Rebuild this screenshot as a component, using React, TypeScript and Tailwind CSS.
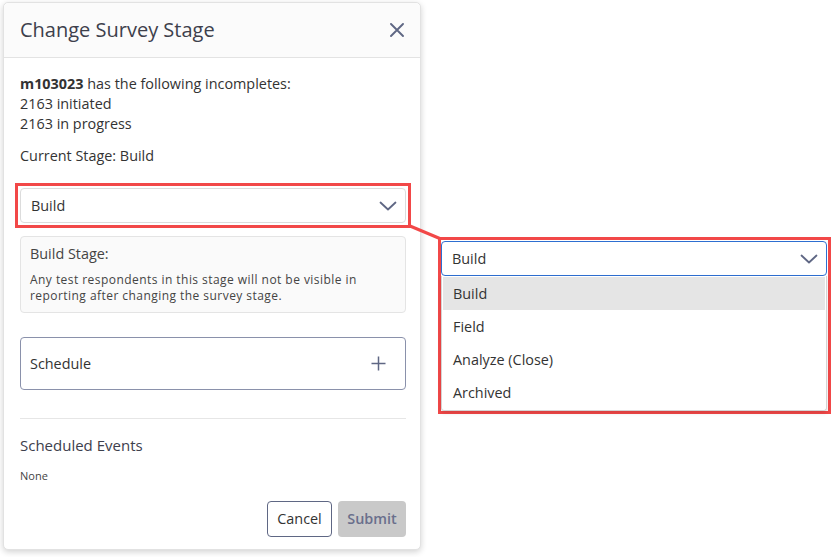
const font = { fontFamily: '"Open Sans", "Noto Sans", sans-serif' };

function Chevron() {
  return (
    <svg width="18" height="10" viewBox="0 0 18 10" fill="none">
      <polyline points="1.5,1.5 9,8.5 16.5,1.5" stroke="#5f6784" strokeWidth="1.8" strokeLinecap="round" strokeLinejoin="round" />
    </svg>
  );
}

export default function App() {
  return (
    <div className="relative w-[831px] h-[557px] bg-white overflow-hidden text-[#333]" style={font}>
      <svg className="absolute left-0 top-0 pointer-events-none" width="831" height="557">
        <line x1="410" y1="226" x2="441" y2="239" stroke="#f24848" strokeWidth="3" />
      </svg>

      <div className="flex items-start pl-[3px] pt-[2px]">
        {/* modal */}
        <div className="shrink-0 w-[418px] h-[548px] bg-white border border-[#e2e2e2] rounded-[5px] shadow-[0_2px_6px_rgba(0,0,0,0.18)] flex flex-col">
          <div className="h-[55px] flex items-center justify-between pl-[16px] pr-[16px] border-b border-[#e3e3e3] bg-[#fbfbfb] rounded-t-[5px]">
            <div className="text-[20px] text-[#3d404c] leading-none">Change Survey Stage</div>
            <svg width="14" height="14" viewBox="0 0 14 14">
              <path d="M1 1 L13 13 M13 1 L1 13" stroke="#5f6784" strokeWidth="1.9" strokeLinecap="round" />
            </svg>
          </div>

          <div className="pl-[16px] pr-[14px] pt-[16px] flex flex-col">
            <div className="text-[14.4px] leading-[20px] text-[#333]">
              <div>
                <span className="font-bold">m103023</span> has the following incompletes:
              </div>
              <div>2163 initiated</div>
              <div>2163 in progress</div>
            </div>
            <div className="text-[14.4px] leading-[20px] mt-[12px]">Current Stage: Build</div>

            <div className="mt-[17px] -mx-[5px] border-[3px] border-[#f24848] p-[2px]">
              <div className="h-[35px] border border-[#dcdcdc] rounded-[4px] flex items-center justify-between pl-[10px] pr-[8px]">
                <span className="text-[14.4px]">Build</span>
                <Chevron />
              </div>
            </div>

            <div className="mt-[8px] border border-[#e4e4e4] rounded-[4px] bg-[#fafafa] px-[9px] pt-[7px] pb-[8px]">
              <div className="text-[14.4px] leading-[20px] text-[#444]">Build Stage:</div>
              <div className="text-[12px] tracking-[0.45px] leading-[16px] text-[#444] mt-[8px]">
                Any test respondents in this stage will not be visible in reporting after changing the survey stage.
              </div>
            </div>

            <div className="mt-[24px] h-[53px] border border-[#8a91ab] rounded-[4px] flex items-center justify-between pl-[9px] pr-[19px]">
              <span className="text-[14.4px]">Schedule</span>
              <svg width="15" height="15" viewBox="0 0 15 15">
                <path d="M7.5 0.5 V14.5 M0.5 7.5 H14.5" stroke="#5f6784" strokeWidth="1.5" />
              </svg>
            </div>

            <div className="mt-[28px] border-t border-[#e6e6e6]" />

            <div className="mt-[16px] text-[15px] leading-[20px] text-[#3d404c]">Scheduled Events</div>
            <div className="mt-[13px] text-[11px] leading-[16px] text-[#444]">None</div>

            <div className="mt-[17px] flex justify-end gap-[6px]">
              <button className="h-[36px] w-[65px] border border-[#5f6784] rounded-[4px] bg-white text-[14.4px] text-[#333]">
                Cancel
              </button>
              <button className="h-[36px] w-[68px] rounded-[4px] bg-[#c9c9c9] text-[14.4px] font-semibold text-[#6a6f8c]">
                Submit
              </button>
            </div>
          </div>
        </div>

        {/* expanded dropdown annotation */}
        <div className="shrink-0 ml-[17px] mt-[235px] w-[393px] border-[3px] border-[#f24848] pt-[1px]">
          <div className="h-[35px] border border-[#2e6fd1] rounded-[4px] flex items-center justify-between pl-[10px] pr-[8px] mr-[1px]">
            <span className="text-[14.4px]">Build</span>
            <Chevron />
          </div>
          <div className="border border-[#d4d4d4] border-t-0 rounded-b-[3px] shadow-[0_2px_4px_rgba(0,0,0,0.12)] p-[1px] mr-[1px]">
            <div className="h-[33px] bg-[#e5e5e5] flex items-center pl-[10px] text-[14.4px]">Build</div>
            <div className="h-[33px] flex items-center pl-[10px] text-[14.4px]">Field</div>
            <div className="h-[33px] flex items-center pl-[10px] text-[14.4px]">Analyze (Close)</div>
            <div className="h-[33px] flex items-center pl-[10px] text-[14.4px]">Archived</div>
          </div>
        </div>
      </div>
    </div>
  );
}
